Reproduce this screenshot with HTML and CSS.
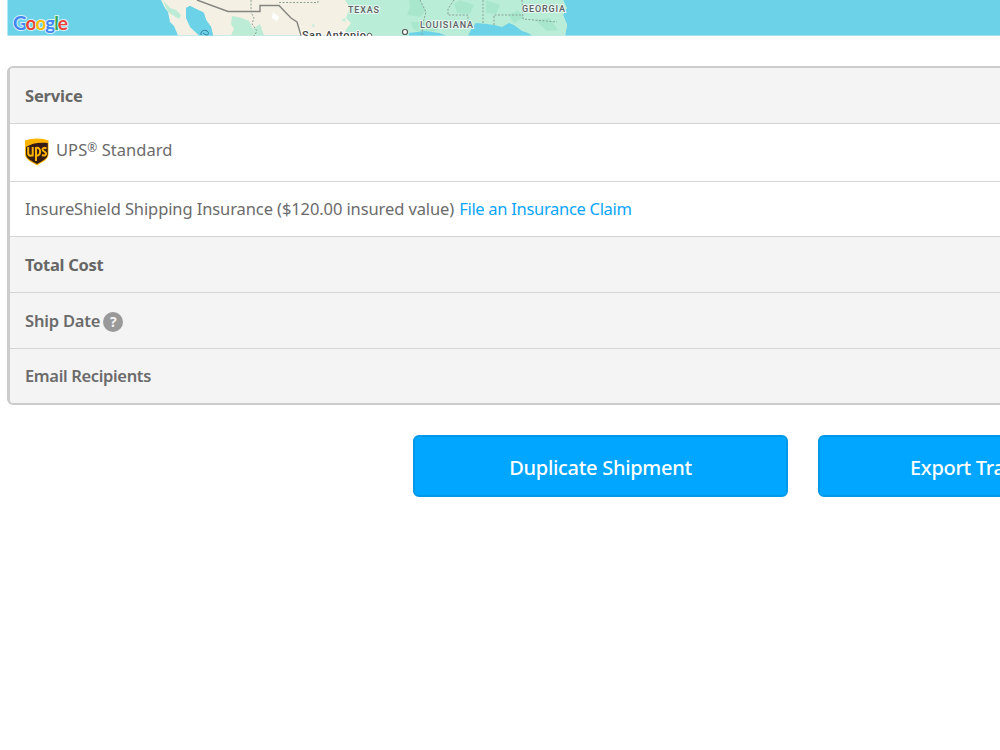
FILE: index.html
```
<!DOCTYPE html>
<html lang="en">
<head>
<meta charset="utf-8">
<title>Shipment Details</title>
<link rel="stylesheet" href="styles.css">
</head>
<body>
<main class="page">
  <svg class="map" width="993" height="36" viewBox="7 0 993 36" role="img" aria-label="Map">
    <rect x="7.5" width="993" height="35.6" fill="#6bd2e8"/>
    <path d="M161 0L165 8 168 12 170 22 174 26 178 35.6H206L198 30 190 21 186 14 186 8 190 6 198 10 203 12 206 20 211 27 213 35.6H565L567 25 563 15 566 8 563 0Z" fill="#f4f0e4"/>
    <path d="M186 8L190 6 198 10 204 13 206 20 211 27 213 35.6H199L190 27 186 18Z" fill="#6bd2e8"/>
    <path d="M163 0L170 8 176 10 181 15 179 19 174 16 168 12Z" fill="#bcecd6"/>
    <path d="M232 16L242 18 249 21 253 29 260 24 264 35.6H231L234 29 231 24Z" fill="#bcecd6"/>
    <path d="M345 0L350 8 346 18 351 23 345 31 350 35.6H565L567 25 563 15 567 8 563 0Z" fill="#baedd7"/>
    <path d="M409 0L420 0 426 11 420 17 407 15 410 7ZM460 0L474 5 470 14 457 13 454 4ZM486 0L500 5 496 14 486 13ZM535 20L550 18 558 30 547 31ZM411 22L432 22 438 30 425 34 413 29ZM508 15L518 10 524 18 514 23Z" fill="#a9e7cd"/>
    <path d="M409 33L425 31 439 33 446 35.6H409ZM468 35.6L472 28 476 23 487 24 494 25 502 27 509 23 514 25 522 31 528 33 532 35.6Z" fill="#6bd2e8"/>
    <path d="M273 12L279 17 277 21 272 18Z" fill="#fff"/>
    <path d="M312 24L315 25 313 28ZM341 20L345 18 346 22Z" fill="#c4efdc"/>
    <path d="M197 0L228 11.5H260V5.5H279L291 18 297 22 301 35.6" fill="none" stroke="#858580" stroke-width="1.4"/>
    <g fill="none" stroke="#83988e" stroke-width=".9" stroke-dasharray="2 1.5"><path d="M251 0V12L254 18 252 24 257 31 254 36M279 2.5H318V0M420 0L426 12 423 23 422 35M454 0L448 9V15H468V24M483 0V24M522 0L523 19 557 22M521 15H494V25"/></g>
    <path d="M201 35C200 30 206 29 208 32S206 36 203 33" fill="none" stroke="#367f9d" stroke-width="1"/>
    <circle cx="405" cy="32" r="2.5" fill="#fff" stroke="#555" stroke-width="1.2"/>
    <g class="map-label"><text x="348" y="12.5" textLength="31">TEXAS</text><text x="420" y="27.5" textLength="53">LOUISIANA</text><text x="522" y="11.5" textLength="43">GEORGIA</text></g>
    <text class="city" x="302" y="39" textLength="64">San Antonio</text>
    <circle cx="369.5" cy="35.5" r="2.2" fill="#fff" stroke="#555"/>
    <text class="google" x="13" y="30" textLength="55"><tspan fill="#4285f4">G</tspan><tspan fill="#ea4335">o</tspan><tspan fill="#fbbc04">o</tspan><tspan fill="#4285f4">g</tspan><tspan fill="#34a853">l</tspan><tspan fill="#ea4335">e</tspan></text>
  </svg>
  <section class="details">
    <div class="row shaded heading service-title"><span>Service</span></div>
    <div class="row carrier">
      <svg class="ups" width="24" height="28" viewBox="0 0 24 28" aria-label="UPS">
        <path d="M0 2.5C6-.3 18-.3 23.5 2.5V16C23.5 22 17 24 12 27.5 7 24 0 22 0 16Z" fill="#ffb500"/>
        <path d="M1 9C7 5 14 4 22.8 5V16C22.8 21 17 23 12 26 7 23 1 21 1 16Z" fill="#351c15"/>
        <g fill="none" stroke="#ffb500" stroke-width="2"><path d="M3.2 9V15.5C3.2 18.3 7.7 18.3 7.7 16V9M7.7 9V18.5M11 23V10C16.5 8.2 16.5 18.8 11 17.7M21.4 10.5C17.3 8.4 16.5 12.1 19 13.3 22.8 15 20.8 19 17 17"/></g>
      </svg>
      <span class="carrier-name">UPS<span class="reg">®</span> Standard</span>
    </div>
    <div class="row insurance"><span class="insured">InsureShield Shipping Insurance ($120.00 insured value)</span><a href="#">File an Insurance Claim</a></div>
    <div class="row shaded heading total"><span>Total Cost</span></div>
    <div class="row shaded medium ship"><span>Ship Date</span><i class="help">?</i></div>
    <div class="row shaded medium recipients"><span>Email Recipients</span></div>
  </section>
  <div class="actions">
    <button class="duplicate">Duplicate Shipment</button>
    <button class="export">Export Tracking</button>
  </div>
</main>
</body>
</html>
```
FILE: styles.css
```
* { box-sizing: border-box; }
body { margin: 0; background: #fff; overflow: hidden; font: 16.5px "Noto Sans", sans-serif; color: #6b6b6b; }
.page { height: 750px; overflow: hidden; padding-left: 7px; }
.map { display: block; width: 993px; height: 36px; }
.map-label { font: 500 9px Roboto, sans-serif; fill: #5d6265; stroke: #e8f7f1; stroke-width: 2px; paint-order: stroke; }
.city { font: 500 11px Roboto, sans-serif; fill: #444; stroke: #fff; stroke-width: 2px; paint-order: stroke; }
.google { font: 700 19px Lato, sans-serif; stroke: #d8f2f8; stroke-width: 2px; paint-order: stroke; }
.details { width: 1200px; margin-top: 30px; border: solid #ccc; border-width: 2px 3px; border-radius: 6px; overflow: hidden; }
.row { display: flex; align-items: center; height: 56px; padding: 1px 15px 2px; border-bottom: 1px solid #d5d5d5; white-space: nowrap; }
.row:last-child { height: 54px; padding: 0 15px 1px; border-bottom: 0; }
.shaded { background: #f4f4f4; }
.heading { font-weight: 700; color: #666; }
.medium { font-weight: 600; }
.service-title { letter-spacing: -.2px; }
.total { letter-spacing: -.3px; }
.ship { letter-spacing: -.2px; }
.recipients { letter-spacing: -.35px; }
.carrier { height: 58px; padding-bottom: 6px; padding-top: 0; }
.carrier-name { letter-spacing: .05px; }
.ups { flex: none; margin: 4px 7px 0 0; }
.reg { font-size: 12px; vertical-align: 4px; line-height: 0; }
.insurance { height: 55px; gap: 5px; padding-top: 0; padding-bottom: 1px; }
.insured { letter-spacing: -.1px; }
.row a { color: #0aa5fa; text-decoration: none; letter-spacing: -.3px; }
.help { display: flex; align-items: center; justify-content: center; width: 20px; height: 20px; margin: 3px 0 0 3px; border-radius: 50%; background: #999; color: #f4f4f4; font: 700 14px "Noto Sans", sans-serif; }
.actions { display: flex; gap: 30px; width: 1200px; margin: 30px 0 0 406px; }
.actions button { flex: none; width: 375px; height: 62px; padding: 2px 0 0; border: 2px solid #0099e8; border-radius: 6px; background: #00a6ff; color: #fff; font: 500 20px "Noto Sans", sans-serif; letter-spacing: -.3px; white-space: nowrap; }
.actions .export { padding-left: 90px; text-align: left; }
```
